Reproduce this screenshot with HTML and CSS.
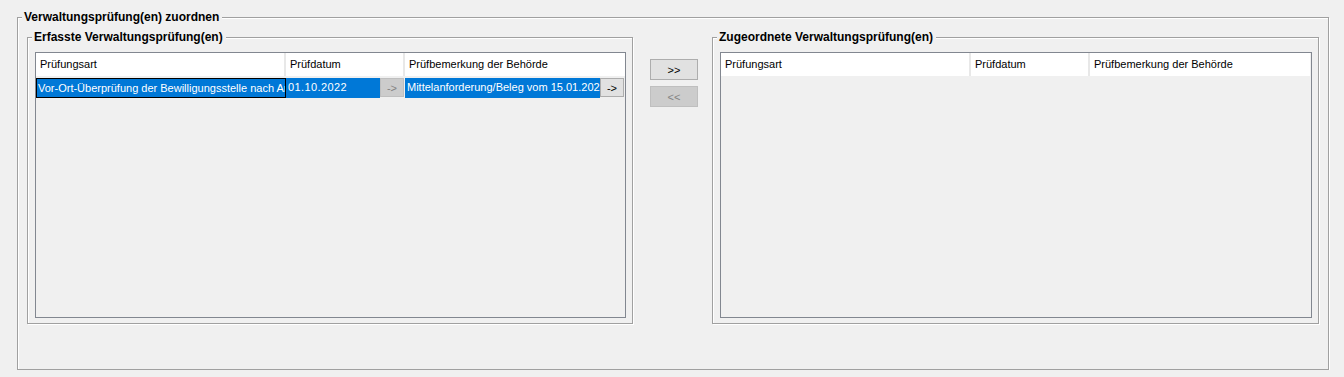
FILE: index.html
```html
<!DOCTYPE html>
<html lang="de">
<head>
    <meta charset="UTF-8">
    <title>Verwaltungsprüfung(en) zuordnen</title>
    <link rel="stylesheet" href="styles.css">
</head>
<body>
    <div class="group outer">
        <span class="group-title">Verwaltungsprüfung(en) zuordnen</span>

        <div class="assign">
            <div class="group left">
                <span class="group-title">Erfasste Verwaltungsprüfung(en)</span>
                <div class="grid">
                    <div class="grid-head">
                        <div class="head-cell c1">Prüfungsart</div>
                        <div class="head-cell c2">Prüfdatum</div>
                        <div class="head-cell c3">Prüfbemerkung der Behörde</div>
                    </div>
                    <div class="grid-row">
                        <div class="cell c1 focus">Vor-Ort-Überprüfung der Bewilligungsstelle nach Art. 48 VO (EU) 809/2014</div>
                        <div class="cell c2">
                            <span class="val date">01.10.2022</span>
                            <button class="cell-btn" disabled>-&gt;</button>
                        </div>
                        <div class="cell c3">
                            <span class="val">Mittelanforderung/Beleg vom 15.01.2022</span>
                            <button class="cell-btn">-&gt;</button>
                        </div>
                    </div>
                </div>
            </div>

            <div class="move-buttons">
                <button class="move-btn">&gt;&gt;</button>
                <button class="move-btn" disabled>&lt;&lt;</button>
            </div>

            <div class="group right">
                <span class="group-title">Zugeordnete Verwaltungsprüfung(en)</span>
                <div class="grid">
                    <div class="grid-head">
                        <div class="head-cell c1">Prüfungsart</div>
                        <div class="head-cell c2">Prüfdatum</div>
                        <div class="head-cell c3">Prüfbemerkung der Behörde</div>
                    </div>
                </div>
            </div>
        </div>
    </div>
</body>
</html>
```

FILE: styles.css
```css
body {
    margin: 0;
    background: #f0f0f0;
    font-family: "Liberation Sans", Arial, sans-serif;
    font-size: 11px;
    color: #000;
}

/* etched group box */
.group {
    position: relative;
    box-sizing: border-box;
    border: 1px solid #a0a0a0;
    box-shadow: inset 1px 1px 0 #fff, 1px 1px 0 #fff;
}
.group-title {
    position: absolute;
    top: -8px;
    left: 4px;
    padding: 0 3px 0 2px;
    background: #f0f0f0;
    font: bold 12px/14px "Liberation Sans", Arial, sans-serif;
    white-space: nowrap;
}

.outer {
    margin: 17px 15px 0 17px;
    padding: 19px 9px 45px 9px;
}
.assign { display: flex; }
.assign .group { padding: 14px 6px 5px 7px; }
.left { width: 606px; }
.right { flex: 1; }

.move-buttons {
    width: 79px;
    box-sizing: border-box;
    padding: 22px 0 0 17px;
    display: flex;
    flex-direction: column;
    gap: 6px;
}
.move-btn {
    width: 48px;
    height: 21px;
    padding: 0;
    background: #e1e1e1;
    border: 1px solid #adadad;
    font: 11px "Liberation Sans", Arial, sans-serif;
    color: #000;
}
.move-btn:disabled, .cell-btn:disabled {
    background: #cccccc;
    border-color: #bfbfbf;
    color: #838383;
}

/* table */
.grid {
    box-sizing: border-box;
    height: 266px;
    border: 1px solid #828790;
}
.grid-head {
    display: flex;
    height: 23px;
}
.head-cell {
    box-sizing: border-box;
    background: #fff;
    border-right: 2px solid #e8e8e8;
    padding-left: 4px;
    line-height: 23px;
    white-space: nowrap;
}
.c1 { width: 250px; }
.c2 { width: 119px; }
.c3 { width: 220px; border-right: none; }

.grid-row {
    display: flex;
    height: 20px;
    margin-top: 2px;
    color: #fff;
}
.cell {
    box-sizing: border-box;
    display: flex;
    line-height: 19px;
    white-space: nowrap;
    overflow: hidden;
}
.cell.focus {
    display: block;
    background: #0078d7;
    border: 1px solid #000;
    padding-left: 1px;
    line-height: 18px;
}
.val {
    flex: 1;
    overflow: hidden;
    background: #0078d7;
    padding-left: 2px;
}
.date { letter-spacing: 0.4px; }
.cell-btn {
    width: 24px;
    height: 19px;
    margin-right: 1px;
    padding: 0;
    background: #e1e1e1;
    border: 1px solid #adadad;
    font: 11px "Liberation Sans", Arial, sans-serif;
    color: #000;
}
```
